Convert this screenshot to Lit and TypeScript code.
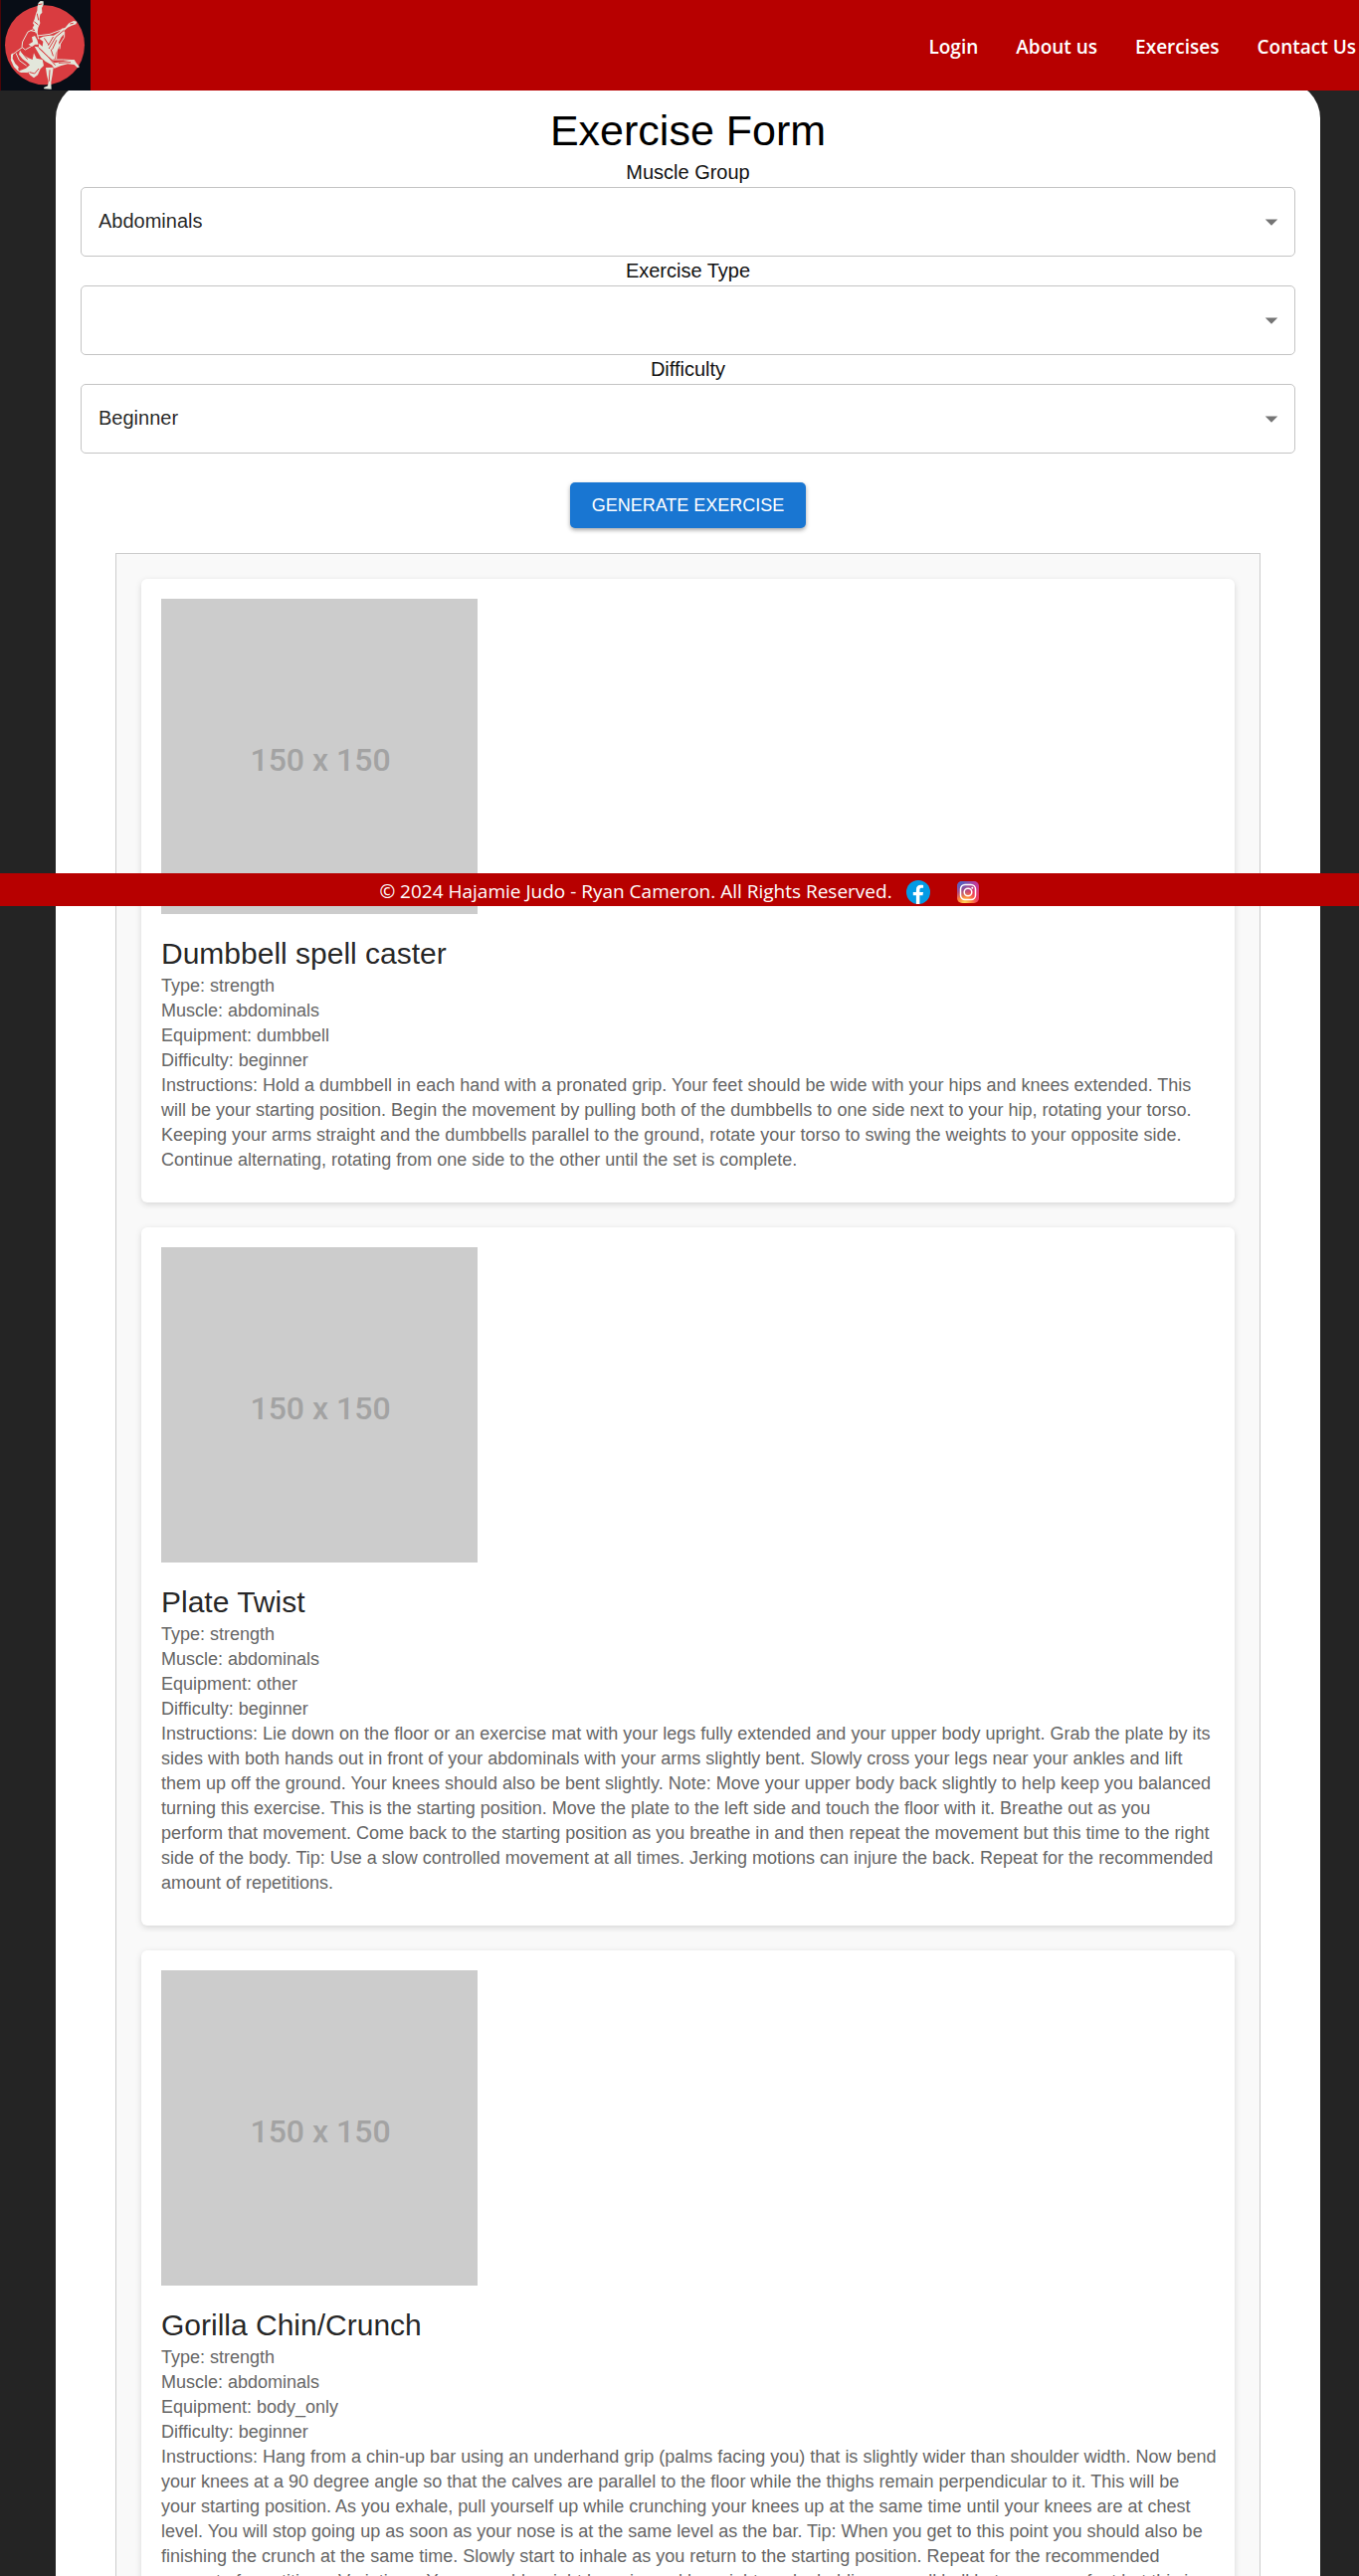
import { LitElement, html, svg, css } from "lit";
import { customElement, property } from "lit/decorators.js";

interface Exercise {
  name: string;
  type: string;
  muscle: string;
  equipment: string;
  difficulty: string;
  instructions: string;
}

const EXERCISES: Exercise[] = [
  {
    name: "Dumbbell spell caster",
    type: "strength",
    muscle: "abdominals",
    equipment: "dumbbell",
    difficulty: "beginner",
    instructions:
      "Hold a dumbbell in each hand with a pronated grip. Your feet should be wide with your hips and knees extended. This will be your starting position. Begin the movement by pulling both of the dumbbells to one side next to your hip, rotating your torso. Keeping your arms straight and the dumbbells parallel to the ground, rotate your torso to swing the weights to your opposite side. Continue alternating, rotating from one side to the other until the set is complete.",
  },
  {
    name: "Plate Twist",
    type: "strength",
    muscle: "abdominals",
    equipment: "other",
    difficulty: "beginner",
    instructions:
      "Lie down on the floor or an exercise mat with your legs fully extended and your upper body upright. Grab the plate by its sides with both hands out in front of your abdominals with your arms slightly bent. Slowly cross your legs near your ankles and lift them up off the ground. Your knees should also be bent slightly. Note: Move your upper body back slightly to help keep you balanced turning this exercise. This is the starting position. Move the plate to the left side and touch the floor with it. Breathe out as you perform\u00a0that movement. Come back to the starting position as you breathe in and then repeat the movement but this time to the right side of the body. Tip: Use a slow controlled movement at all times. Jerking motions can injure the back. Repeat for the recommended amount of repetitions.",
  },
  {
    name: "Gorilla Chin/Crunch",
    type: "strength",
    muscle: "abdominals",
    equipment: "body_only",
    difficulty: "beginner",
    instructions:
      "Hang from a chin-up bar using an underhand grip (palms facing you) that is slightly wider than shoulder width. Now bend your knees at a 90 degree angle so that the calves are parallel to the floor while the thighs remain perpendicular to it. This will be your starting position. As you exhale, pull yourself up while crunching your knees up at the same time until your knees are at chest level. You will stop going up as soon as your nose is at the same level as the bar. Tip: When you get to this point you should also be finishing the crunch at the same time. Slowly start to inhale as you return to the starting position. Repeat for the recommended amount of repetitions. Variations: You can add weight by using ankle weights or by holding a small ball between your feet but this is for advanced athletes.",
  },
];

const logo = svg`
  <rect width="273" height="273" fill="#080d16"/>
  <rect width="3" height="273" fill="#4a0508"/>
  <circle cx="135" cy="136" r="120" fill="#d93c40"/>
  <g fill="#e3e7db">
    <path d="M116 8 L122 3 L131 4 L131 14 L126 24 L127 38 L121 44 L119 58 L121 70 L115 84 L113 98 L108 101 L104 90 L98 84 L103 76 L99 70 L104 58 L108 42 L112 32 L113 18 Z"/>
    <path d="M208 70 L222 63 L232 65 L229 73 L216 77 L204 83 L194 92 L193 103 L184 113 L177 128 L180 138 L174 150 L168 160 L166 176 L157 180 L140 166 L128 152 L116 142 L118 131 L128 140 L130 125 L118 116 L130 110 L150 107 L162 107 L180 95 L186 86 L196 84 Z"/>
    <path d="M96 112 L105 108 L112 120 L116 134 L106 134 L96 141 L86 134 L99 126 Z"/>
    <path d="M104 140 L114 142 L136 164 L164 190 L190 186 L212 182 L224 180 L230 190 L240 202 L234 205 L224 195 L204 193 L184 198 L164 206 L156 196 L138 186 L124 174 Z"/>
    <path d="M60 152 L70 164 L84 174 L98 180 L102 160 L110 176 L128 180 L132 198 L122 208 L114 226 L102 235 L90 226 L84 216 L64 219 L58 214 L78 206 L90 196 L82 188 L68 178 L57 164 Z"/>
    <path d="M33 164 L40 160 L38 176 L46 192 L56 202 L54 214 L42 202 L34 184 Z"/>
    <path d="M138 204 L161 203 L158 226 L154 248 L155 269 L133 268 L132 264 L144 259 L146 246 L141 226 Z"/>
  </g>
  <g fill="none" stroke="#e3e7db" stroke-width="3" stroke-linejoin="round">
    <path d="M100 89 L84 96 L68 126 L66 142 L76 150 L94 140"/>
    <path d="M92 92 L111 96 L116 118"/>
    <path d="M67 143 L46 158 L36 166 L34 180 L46 200 L58 216 L84 218"/>
    <path d="M48 160 L58 182 L80 198"/>
    <path d="M112 108 L150 103 L184 90"/>
    <path d="M194 96 L194 112 L178 138"/>
    <path d="M172 136 L170 178 M182 130 L180 148"/>
    <path d="M158 180 L190 180 L224 182"/>
  </g>
  <g fill="none" stroke="#d93c40" stroke-width="3" stroke-linecap="round">
    <path d="M116 14 L126 12 M112 42 L116 60 M104 66 L114 74"/>
    <path d="M192 92 L168 112 L148 146 M160 112 L146 136 M134 116 L146 134"/>
    <path d="M154 150 L160 168 M170 122 L158 148"/>
    <path d="M118 146 L144 170 L166 196"/>
    <path d="M66 158 L82 178 M76 154 L92 176 M88 150 L98 168"/>
    <path d="M90 218 L104 222 L116 208"/>
    <path d="M150 212 L148 244 M212 72 L220 70 M178 190 L212 188"/>
  </g>
`;

@customElement("site-header")
class SiteHeader extends LitElement {
  static styles = css`
    :host {
      display: block;
    }
    .bar {
      display: flex;
      justify-content: space-between;
      align-items: center;
      background: #b70000;
      padding-right: 3px;
    }
    .logo,
    .logo svg {
      display: block;
      width: 91px;
      height: 91px;
    }
    .links {
      display: flex;
      gap: 38px;
      margin: 0;
      padding: 4px 0 0;
      list-style: none;
    }
    .link {
      color: #fff;
      font: 600 19px/27px "Segoe UI", "Open Sans", "Noto Sans", sans-serif;
      text-decoration: none;
      white-space: nowrap;
    }
  `;

  render() {
    return html`
      <header class="bar">
        <a class="logo" href="#" aria-label="Home">
          <svg viewBox="0 0 273 273" aria-hidden="true">${logo}</svg>
        </a>
        <nav>
          <ul class="links">
            ${["Login", "About us", "Exercises", "Contact Us"].map(
              (name) => html`<li><a class="link" href="#">${name}</a></li>`
            )}
          </ul>
        </nav>
      </header>
    `;
  }
}

@customElement("site-footer")
class SiteFooter extends LitElement {
  static styles = css`
    :host {
      display: block;
    }
    .bar {
      display: flex;
      justify-content: center;
      align-items: center;
      padding: 5px 0 1px;
      background: #b70000;
      color: #fff;
      font: 400 19px/27px "Segoe UI", "Open Sans", "Noto Sans", sans-serif;
    }
    .text {
      margin: 0 14px 0 0;
      white-space: nowrap;
    }
    .social {
      display: flex;
      gap: 26px;
    }
    .social svg {
      display: block;
      width: 24px;
      height: 24px;
    }
  `;

  render() {
    return html`
      <footer class="bar">
        <p class="text">© 2024 Hajamie Judo - Ryan Cameron. All Rights Reserved.</p>
        <div class="social">
          <a href="#" aria-label="Facebook">
            <svg viewBox="0 0 24 24">
              <circle cx="12" cy="12" r="12" fill="#039be5" />
              <path
                d="M13.4 15.2h3.1l.5-3.2h-3.6v-1.7c0-1.3.4-2.5 1.7-2.5h2V5c-.4 0-1.1-.2-2.5-.2-3 0-4.7 1.6-4.7 5.1V12H6.8v3.2h3.1v8.7c.6.1 1.2.1 1.9.1.6 0 1.1 0 1.6-.1z"
                fill="#fff"
              />
            </svg>
          </a>
          <a href="#" aria-label="Instagram">
            <svg viewBox="0 0 24 24">
              <defs>
                <radialGradient id="warm" cx="0.35" cy="1" r="1">
                  <stop offset="0" stop-color="#ffdd55" />
                  <stop offset="0.3" stop-color="#ff8a3c" />
                  <stop offset="0.6" stop-color="#ee3a5c" />
                  <stop offset="1" stop-color="#c13a9c" />
                </radialGradient>
                <radialGradient id="cool" cx="0.1" cy="0" r="0.8">
                  <stop offset="0" stop-color="#4168c9" />
                  <stop offset="1" stop-color="#4168c9" stop-opacity="0" />
                </radialGradient>
              </defs>
              <rect x="1" y="1" width="22" height="22" rx="5" fill="url(#warm)" />
              <rect x="1" y="1" width="22" height="22" rx="5" fill="url(#cool)" />
              <g fill="none" stroke="#fff" stroke-width="1.5">
                <rect x="4.5" y="4.5" width="15" height="15" rx="4.5" />
                <circle cx="12" cy="12" r="3.8" />
              </g>
              <circle cx="16.3" cy="7.7" r="1" fill="#fff" />
            </svg>
          </a>
        </div>
      </footer>
    `;
  }
}

@customElement("select-field")
class SelectField extends LitElement {
  @property() label = "";
  @property() value = "";
  @property({ attribute: false }) options: string[] = [];

  static styles = css`
    :host {
      display: block;
    }
    .label {
      display: block;
      font-size: 20px;
      line-height: 29px;
      text-align: center;
      color: #111;
    }
    .box {
      display: grid;
      align-items: center;
    }
    .select {
      grid-area: 1 / 1;
      width: 100%;
      height: 70px;
      padding: 0 48px 2px 17px;
      appearance: none;
      border: 1px solid #c4c4c4;
      border-radius: 5px;
      background: #fff;
      color: rgba(0, 0, 0, 0.87);
      font: inherit;
      font-size: 20px;
    }
    .arrow {
      grid-area: 1 / 1;
      justify-self: end;
      width: 30px;
      height: 30px;
      margin-right: 9px;
      fill: #757575;
      pointer-events: none;
    }
  `;

  render() {
    return html`
      <label class="label" for="choice">${this.label}</label>
      <div class="box">
        <select class="select" id="choice">
          ${["", ...this.options].map(
            (o) => html`<option value=${o} ?selected=${o === this.value}>${o}</option>`
          )}
        </select>
        <svg class="arrow" viewBox="0 0 24 24" aria-hidden="true"><path d="M7 10l5 5 5-5z" /></svg>
      </div>
    `;
  }
}

@customElement("exercise-card")
class ExerciseCard extends LitElement {
  @property({ attribute: false }) exercise!: Exercise;

  static styles = css`
    :host {
      display: block;
    }
    .card {
      padding: 20px 17px 30px 20px;
      border-radius: 6px;
      background: #fff;
      box-shadow: 0 2px 6px rgba(0, 0, 0, 0.14);
    }
    .picture {
      display: block;
      width: 318px;
      height: 317px;
      margin-bottom: 20px;
      background: #ccc;
    }
    .picture text {
      font: 500 32px Roboto, "Liberation Sans", sans-serif;
      fill: #a3a3a3;
      text-anchor: middle;
    }
    .name {
      margin: 0;
      font-size: 30px;
      font-weight: 400;
      line-height: 40px;
      color: rgba(0, 0, 0, 0.87);
    }
    .line {
      margin: 0;
      font-size: 18px;
      line-height: 25px;
      color: #666;
    }
  `;

  render() {
    const e = this.exercise;
    const lines = [
      `Type: ${e.type}`,
      `Muscle: ${e.muscle}`,
      `Equipment: ${e.equipment}`,
      `Difficulty: ${e.difficulty}`,
      `Instructions: ${e.instructions}`,
    ];
    return html`
      <article class="card">
        <svg class="picture" viewBox="0 0 318 317" role="img" aria-label=${e.name}>
          <text x="160" y="173">150 x 150</text>
        </svg>
        <h2 class="name">${e.name}</h2>
        ${lines.map((line) => html`<p class="line">${line}</p>`)}
      </article>
    `;
  }
}

@customElement("app-root")
class AppRoot extends LitElement {
  static styles = css`
    :host {
      display: block;
      position: relative;
      height: 100vh;
      overflow: hidden;
      background: #242424;
      font-family: Arial, "Liberation Sans", sans-serif;
    }
    .header {
      position: relative;
      z-index: 2;
    }
    .footer {
      position: absolute;
      top: 878px;
      left: 0;
      right: 0;
      z-index: 2;
    }
    .panel {
      margin: -9px 39px 0 56px;
      padding: 25px;
      border-radius: 37px;
      background: #fff;
    }
    .title {
      margin: 0;
      padding-bottom: 4px;
      font-size: 43px;
      font-weight: 400;
      line-height: 48px;
      text-align: center;
      color: #000;
    }
    .form {
      display: flex;
      flex-direction: column;
    }
    .submit {
      align-self: center;
      height: 46px;
      margin: 29px 0 25px;
      padding: 0 22px;
      border: 0;
      border-radius: 5px;
      background: #1976d2;
      box-shadow: 0 2px 4px rgba(0, 0, 0, 0.35);
      color: #fff;
      font: inherit;
      font-size: 18px;
      text-transform: uppercase;
    }
    .list {
      display: flex;
      flex-direction: column;
      gap: 25px;
      margin: 0 35px;
      padding: 25px;
      border: 1px solid #ccc;
      background: #f9f9f9;
    }
  `;

  render() {
    return html`
      <site-header class="header"></site-header>
      <main class="panel">
        <form class="form" @submit=${(ev: Event) => ev.preventDefault()}>
          <h1 class="title">Exercise Form</h1>
          <select-field
            label="Muscle Group"
            value="Abdominals"
            .options=${["Abdominals", "Biceps", "Chest"]}
          ></select-field>
          <select-field
            label="Exercise Type"
            .options=${["Cardio", "Strength", "Stretching"]}
          ></select-field>
          <select-field
            label="Difficulty"
            value="Beginner"
            .options=${["Beginner", "Intermediate", "Expert"]}
          ></select-field>
          <button class="submit" type="submit">Generate Exercise</button>
        </form>
        <section class="list" aria-label="Exercises">
          ${EXERCISES.map((e) => html`<exercise-card .exercise=${e}></exercise-card>`)}
        </section>
      </main>
      <site-footer class="footer"></site-footer>
    `;
  }
}
